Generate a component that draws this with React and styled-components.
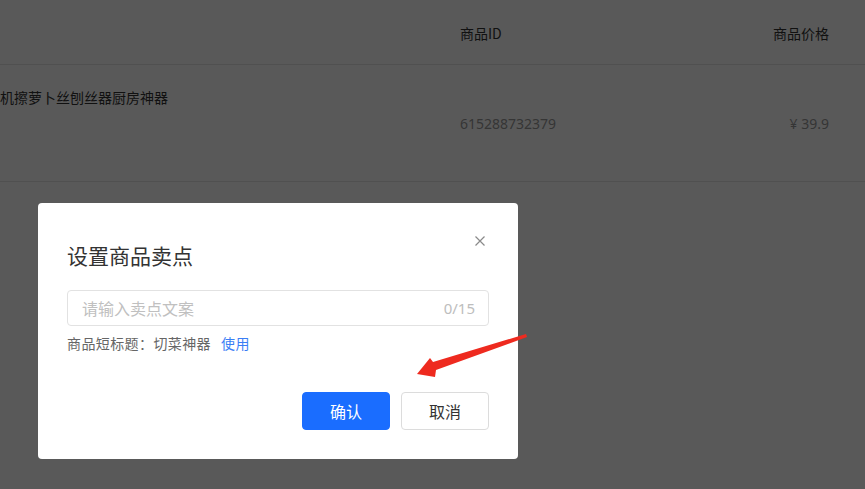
import React from "react";
import styled, { createGlobalStyle } from "styled-components";

const GlobalStyle = createGlobalStyle`
  html, body {
    margin: 0;
    padding: 0;
    background: #ffffff;
    overflow: hidden;
  }
  body {
    font-family: "Noto Sans CJK SC", "Noto Sans", sans-serif;
    font-size: 14px;
    color: #333;
  }
  * { box-sizing: border-box; }
`;

const Page = styled.div`
  width: 865px;
  height: 489px;
  overflow: hidden;
  position: relative;
`;

const Row = styled.div`
  display: grid;
  grid-template-columns: 460px 1fr auto;
  padding-right: 36px;
  border-bottom: 1px solid #e6e6e6;
  height: ${(p) => p.$h}px;
  align-items: ${(p) => (p.$head ? "center" : "start")};
  line-height: 22px;
  font-size: 14px;
`;

const HeadCell = styled.div`
  color: #333;
  text-align: ${(p) => (p.$right ? "right" : "left")};
  padding-top: 1px;
`;

const NameCell = styled.div`
  margin-left: 0;
  padding-top: 21px;
  color: #333;
  white-space: nowrap;
`;

const DataCell = styled.div`
  padding-top: 48px;
  color: #999;
  text-align: ${(p) => (p.$right ? "right" : "left")};
  font-family: "Noto Sans", "Noto Sans CJK SC", sans-serif;
`;

const Overlay = styled.div`
  position: fixed;
  inset: 0;
  background: rgba(0, 0, 0, 0.65);
`;

const Modal = styled.div`
  position: absolute;
  left: 38px;
  top: 203px;
  width: 480px;
  background: #fff;
  border-radius: 4px;
  padding: 38px 29px 29px;
`;

const Title = styled.h2`
  margin: 0;
  font-size: 21px;
  line-height: 28px;
  font-weight: 400;
  color: #333;
`;

const Close = styled.button`
  position: absolute;
  top: 33px;
  right: 33px;
  width: 10px;
  height: 10px;
  padding: 0;
  border: none;
  background: none;
  cursor: pointer;
  display: flex;
`;

const InputBox = styled.div`
  margin-top: 21px;
  height: 36px;
  border: 1px solid #e2e2e2;
  border-radius: 4px;
  display: flex;
  align-items: center;
  padding: 0 13px 0 14px;
`;

const Input = styled.input`
  flex: 1;
  border: none;
  outline: none;
  padding: 0;
  font-family: inherit;
  font-size: 16px;
  color: #333;
  background: transparent;
  &::placeholder {
    color: #c0c0c0;
  }
`;

const Counter = styled.span`
  font-family: "Noto Sans", sans-serif;
  font-size: 15px;
  color: #bdbdbd;
`;

const Hint = styled.div`
  margin-top: 8px;
  font-size: 14px;
  line-height: 18px;
  color: #666;
  letter-spacing: 0.4px;
`;

const Link = styled.a`
  color: #3a7ef5;
  margin-left: 10px;
  text-decoration: none;
  cursor: pointer;
`;

const Footer = styled.div`
  margin-top: 40px;
  display: flex;
  justify-content: flex-end;
  gap: 11px;
`;

const Button = styled.button`
  width: 88px;
  height: 38px;
  border-radius: 4px;
  font-family: inherit;
  font-size: 16px;
  cursor: pointer;
  border: 1px solid ${(p) => (p.$primary ? "#1a6dff" : "#dcdcdc")};
  background: ${(p) => (p.$primary ? "#1a6dff" : "#fff")};
  color: ${(p) => (p.$primary ? "#fff" : "#333")};
`;

const Arrow = styled.svg`
  position: fixed;
  left: 410px;
  top: 325px;
  width: 125px;
  height: 60px;
`;

export default function App() {
  return (
    <Page>
      <GlobalStyle />
      <Row $h={65} $head>
        <div />
        <HeadCell>商品ID</HeadCell>
        <HeadCell $right>商品价格</HeadCell>
      </Row>
      <Row $h={117}>
        <NameCell>机擦萝卜丝刨丝器厨房神器</NameCell>
        <DataCell>615288732379</DataCell>
        <DataCell $right>¥ 39.9</DataCell>
      </Row>

      <Overlay>
        <Modal>
          <Title>设置商品卖点</Title>
          <Close aria-label="关闭">
            <svg width="10" height="10" viewBox="0 0 10 10">
              <path d="M0.5 0.5 L9.5 9.5 M9.5 0.5 L0.5 9.5" stroke="#8a8a8a" strokeWidth="1.2" fill="none" />
            </svg>
          </Close>
          <InputBox>
            <Input placeholder="请输入卖点文案" />
            <Counter>0/15</Counter>
          </InputBox>
          <Hint>
            商品短标题：切菜神器<Link>使用</Link>
          </Hint>
          <Footer>
            <Button $primary>确认</Button>
            <Button>取消</Button>
          </Footer>
        </Modal>
        <Arrow viewBox="0 0 125 60">
          <polygon
            points="116,9 23,37 20,33 7,49 25,52 26,45 117,12"
            fill="#ee2a1f"
          />
        </Arrow>
      </Overlay>
    </Page>
  );
}
